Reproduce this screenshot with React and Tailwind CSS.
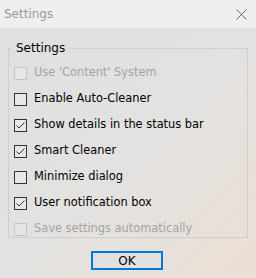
import React from 'react'

const font = { fontFamily: '"DejaVu Sans", sans-serif' }

function Check({ checked, disabled }) {
  return (
    <span
      className={
        'w-[13px] h-[13px] border flex items-center justify-center shrink-0 ' +
        (disabled ? 'border-[#c4c4c4] bg-[#e6e6e6]' : 'border-[#333] bg-[#e7e7e7]')
      }
    >
      {checked && (
        <svg width="11" height="11" viewBox="0 0 11 11">
          <path d="M1.5 5.5 L4 8 L9.5 2.5" fill="none" stroke="#333" strokeWidth="1" />
        </svg>
      )}
    </span>
  )
}

const items = [
  { label: "Use 'Content' System", disabled: true },
  { label: 'Enable Auto-Cleaner' },
  { label: 'Show details in the status bar', checked: true },
  { label: 'Smart Cleaner', checked: true },
  { label: 'Minimize dialog' },
  { label: 'User notification box', checked: true },
  { label: 'Save settings automatically', disabled: true },
]

export default function App() {
  return (
    <div className="w-[256px] h-[278px] flex flex-col overflow-hidden text-[11.4px]" style={font}>
      {/* title bar */}
      <div className="h-[28px] bg-[#efefef] flex items-center justify-between pl-[4px] pr-[9px]">
        <span className="text-[12px] text-[#9a9a9a]">Settings</span>
        <svg width="11" height="11" viewBox="0 0 11 11">
          <path d="M0.5 0.5 L10.5 10.5 M10.5 0.5 L0.5 10.5" stroke="#6a6a6a" strokeWidth="1" />
        </svg>
      </div>

      <div className="flex-1 bg-gradient-to-br from-[#e0e0e0] via-[#e3e2e1] to-[#ebdfd4] px-[8px] pt-[13px]">
        <fieldset className="border border-[#cfcfcf] h-[197px] pl-[5px] pt-[5px] m-0">
          <legend className="ml-[-2px] px-[4px] text-[12px] text-black leading-[14px]">Settings</legend>
          <div className="flex flex-col">
            {items.map((it) => (
              <div key={it.label} className="h-[26px] flex items-center gap-[7px]">
                <Check checked={it.checked} disabled={it.disabled} />
                <span className={it.disabled ? 'text-[#a3a3a3]' : 'text-black'}>{it.label}</span>
              </div>
            ))}
          </div>
        </fieldset>

        <div className="flex justify-center pt-[13px] pr-[2px]">
          <button className="w-[72px] h-[19px] border-2 border-[#0078d7] bg-[#e1e1e1] text-black text-[12px] leading-none">
            OK
          </button>
        </div>
      </div>
    </div>
  )
}
